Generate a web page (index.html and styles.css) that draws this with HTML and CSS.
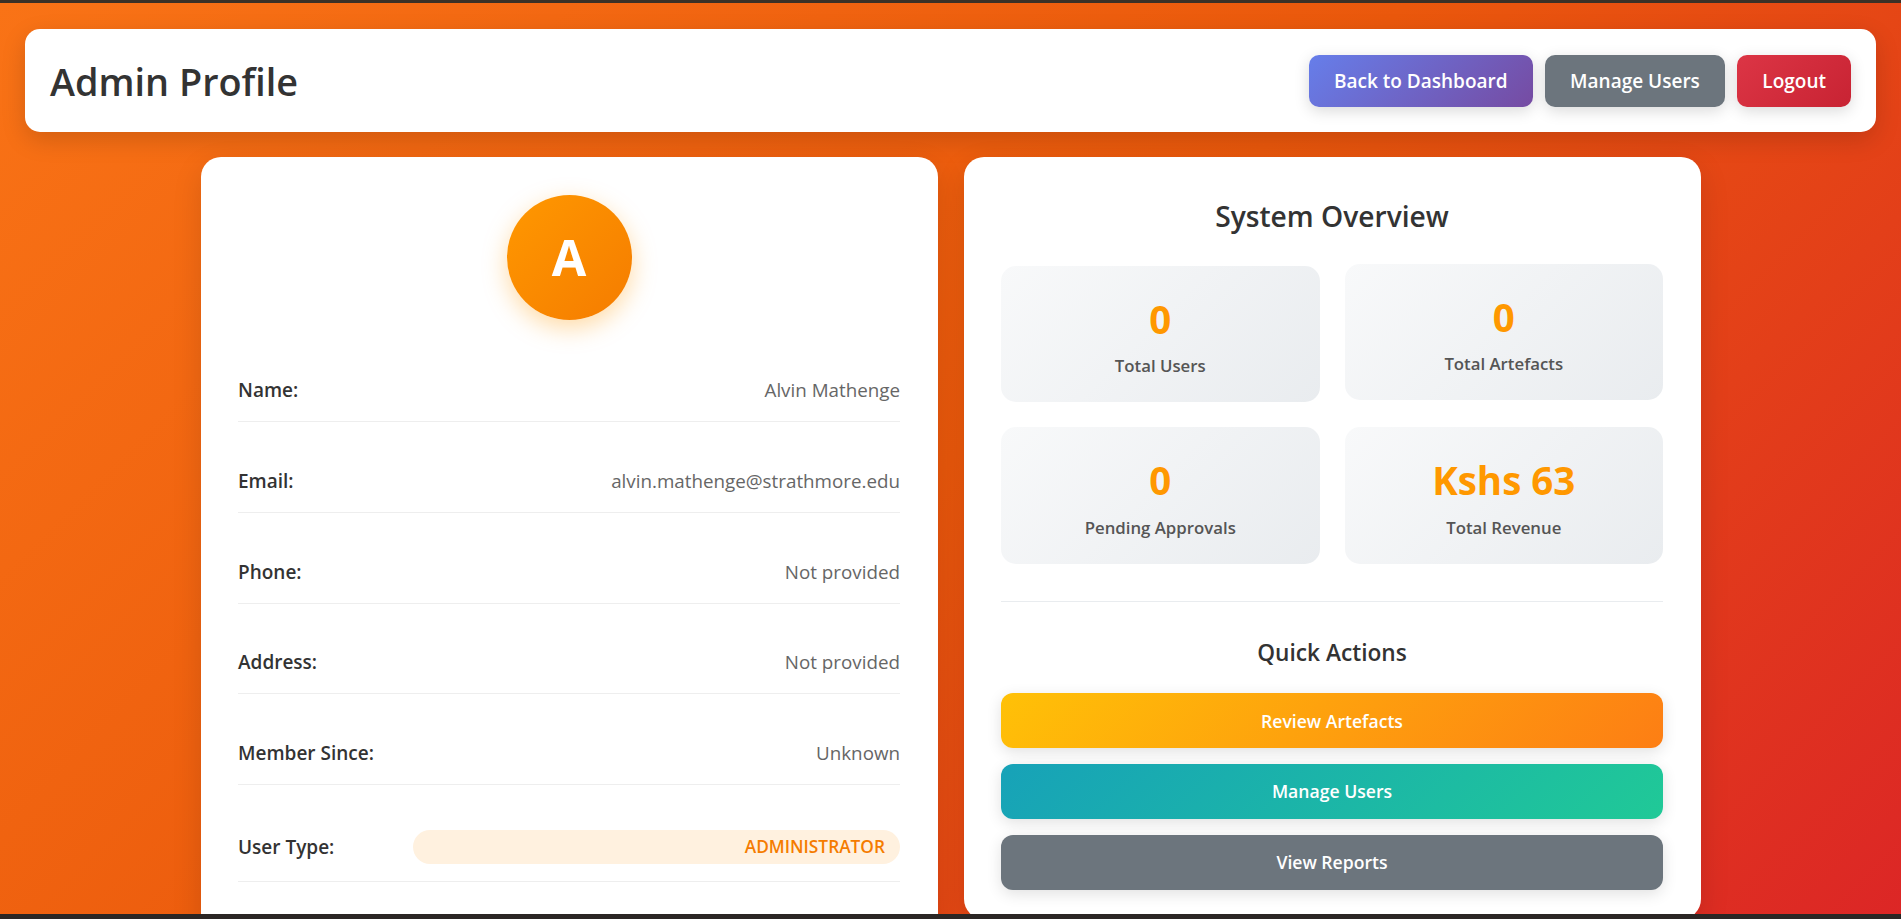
FILE: index.html
```html
<!DOCTYPE html>
<html lang="en">
<head>
<meta charset="utf-8">
<title>Admin Profile</title>
<link rel="stylesheet" href="styles.css">
</head>
<body>
<div class="frame-top"></div>
<header class="page-header">
  <h1 class="page-title">Admin Profile</h1>
  <nav class="header-actions">
    <a class="btn btn-primary" href="#">Back to Dashboard</a>
    <a class="btn btn-secondary" href="#">Manage Users</a>
    <a class="btn btn-danger" href="#">Logout</a>
  </nav>
</header>

<main class="profile-grid">
  <section class="card profile-card">
    <div class="avatar">A</div>
    <div class="info-row"><span class="info-label">Name:</span><span class="info-value">Alvin Mathenge</span></div>
    <div class="info-row"><span class="info-label">Email:</span><span class="info-value">alvin.mathenge@strathmore.edu</span></div>
    <div class="info-row"><span class="info-label">Phone:</span><span class="info-value">Not provided</span></div>
    <div class="info-row"><span class="info-label">Address:</span><span class="info-value">Not provided</span></div>
    <div class="info-row"><span class="info-label">Member Since:</span><span class="info-value">Unknown</span></div>
    <div class="info-row"><span class="info-label">User Type:</span><span class="info-value badge">Administrator</span></div>
  </section>

  <section class="card overview-card">
    <h2 class="section-title">System Overview</h2>
    <div class="stats-grid">
      <div class="stat-box"><div class="stat-number">0</div><div class="stat-label">Total Users</div></div>
      <div class="stat-box stat-box-raised"><div class="stat-number">0</div><div class="stat-label">Total Artefacts</div></div>
      <div class="stat-box"><div class="stat-number">0</div><div class="stat-label">Pending Approvals</div></div>
      <div class="stat-box"><div class="stat-number">Kshs 63</div><div class="stat-label">Total Revenue</div></div>
    </div>
    <div class="divider"></div>
    <h3 class="sub-title">Quick Actions</h3>
    <div class="action-list">
      <a class="action-btn action-review" href="#">Review Artefacts</a>
      <a class="action-btn action-users" href="#">Manage Users</a>
      <a class="action-btn action-reports" href="#">View Reports</a>
    </div>
  </section>
</main>
<div class="frame-bottom"></div>
</body>
</html>
```

FILE: styles.css
```css
* { box-sizing: border-box; }

html, body { margin: 0; }

body {
  font-family: "Open Sans", "Noto Sans", sans-serif;
  background: linear-gradient(135deg, #f97316 0%, #ea580c 50%, #dc2626 100%) fixed;
  min-height: 100vh;
  padding: 29px 25px 40px;
  color: #333;
}

.frame-top {
  position: fixed;
  top: 0; left: 0; right: 0;
  height: 3px;
  background: #3b3127;
  z-index: 10;
}

.frame-bottom {
  position: fixed;
  bottom: 0; left: 0; right: 0;
  height: 5px;
  background: #2b2624;
  z-index: 10;
}

.page-header {
  display: flex;
  justify-content: space-between;
  align-items: center;
  background: #fff;
  border-radius: 15px;
  padding: 25px;
  box-shadow: 0 8px 25px rgba(0, 0, 0, 0.15);
}

.page-title {
  margin: 0;
  padding-top: 3px;
  font-size: 37.8px;
  font-weight: 600;
  line-height: 50px;
  color: #333;
}

.header-actions {
  display: flex;
  gap: 12.5px;
}

.btn {
  display: flex;
  align-items: center;
  height: 52px;
  padding: 0 25px;
  border-radius: 10px;
  font-size: 19px;
  font-weight: 600;
  color: #fff;
  text-decoration: none;
  box-shadow: 0 4px 15px rgba(0, 0, 0, 0.15);
}

.btn-primary { background: linear-gradient(135deg, #667eea 0%, #764ba2 100%); }
.btn-secondary { background: #6c757d; }
.btn-danger { background: linear-gradient(135deg, #dc3545 0%, #c82333 100%); }

.profile-grid {
  max-width: 1500px;
  margin: 25px auto 0;
  display: grid;
  grid-template-columns: 1fr 1fr;
  gap: 26px;
  align-items: start;
}

.card {
  background: #fff;
  border-radius: 20px;
  padding: 37.5px;
  box-shadow: 0 10px 30px rgba(0, 0, 0, 0.12);
}

.profile-card { padding-bottom: 60px; }
.overview-card { padding-bottom: 29px; }

.avatar {
  width: 125px;
  height: 125px;
  border-radius: 50%;
  margin: 0 auto 39.5px;
  background: linear-gradient(135deg, #ff9800 0%, #f57c00 100%);
  display: flex;
  align-items: center;
  justify-content: center;
  color: #fff;
  font-size: 50px;
  font-weight: 700;
  box-shadow: 0 8px 25px rgba(255, 152, 0, 0.35);
}

.info-row {
  display: flex;
  align-items: center;
  padding: 17px 0;
  margin-bottom: 27.75px;
  border-bottom: 1px solid #eeeeee;
  font-size: 19px;
  line-height: 28px;
}

.info-label {
  width: 175px;
  flex-shrink: 0;
  font-weight: 600;
  color: #333;
}

.info-value {
  flex: 1;
  text-align: right;
  color: #666;
}

.info-value:not(.badge) { font-size: 18.8px; }

.badge {
  background: #fff1df;
  color: #f57c00;
  border-radius: 999px;
  padding: 6px 15px;
  text-transform: uppercase;
  font-weight: 600;
  font-size: 17.3px;
  line-height: 22px;
}

.section-title {
  margin: 0 0 28.5px;
  text-align: center;
  font-size: 28.2px;
  font-weight: 600;
  line-height: 43px;
  color: #333;
}

.stats-grid {
  display: grid;
  grid-template-columns: 1fr 1fr;
  gap: 25px;
}

.stat-box {
  background: linear-gradient(135deg, #f8f9fa 0%, #e9ecef 100%);
  border-radius: 15px;
  padding: 29px 20px 24px;
  text-align: center;
}

.stat-box-raised { transform: translateY(-2px); }

.stat-number {
  font-size: 38.5px;
  font-weight: 700;
  line-height: 48px;
  color: #ff9800;
}

.stat-label {
  margin-top: 11.3px;
  font-size: 16.8px;
  font-weight: 600;
  line-height: 24px;
  color: #555;
}

.divider {
  margin-top: 37.3px;
  border-top: 1px solid #e9ecef;
}

.sub-title {
  margin: 36.5px 0 24.5px;
  text-align: center;
  font-size: 22.7px;
  font-weight: 600;
  line-height: 30px;
  color: #333;
}

.action-list {
  display: flex;
  flex-direction: column;
  gap: 15.5px;
}

.action-btn {
  display: flex;
  align-items: center;
  justify-content: center;
  height: 55.4px;
  border-radius: 12px;
  font-size: 17.6px;
  font-weight: 600;
  color: #fff;
  text-decoration: none;
  box-shadow: 0 4px 15px rgba(0, 0, 0, 0.12);
}

.action-review { background: linear-gradient(135deg, #ffc107 0%, #fd7e14 100%); }
.action-users { background: linear-gradient(135deg, #17a2b8 0%, #20c997 100%); }
.action-reports { background: #6c757d; }
```
